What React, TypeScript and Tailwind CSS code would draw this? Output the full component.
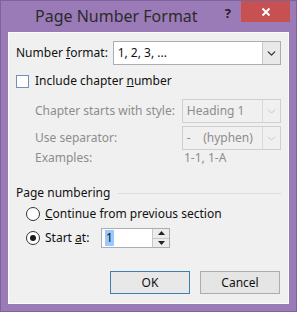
import { ChevronDown } from 'lucide-react';

function Combo({ value, disabled, width }: { value: string; disabled?: boolean; width: string }) {
  return (
    <div
      className={`flex h-[24px] ${width} border ${
        disabled ? 'border-[#cfcfcf] bg-[#f0f0f0] text-[#8d8d8d]' : 'border-[#abadb3] bg-white text-[#111]'
      }`}
    >
      <div className="flex-1 whitespace-pre pl-[4px] leading-[22px]">{value}</div>
      <div
        className={`flex w-[18px] items-center justify-center border-l ${
          disabled ? 'border-[#d9d9d9] text-[#c4c4c4]' : 'border-[#c8c8c8] bg-[#e9e9e9] text-[#3a3a3a]'
        }`}
      >
        <ChevronDown size={13} strokeWidth={disabled ? 1.75 : 2.5} />
      </div>
    </div>
  );
}

function Radio({ checked }: { checked?: boolean }) {
  return (
    <div className="flex h-[14px] w-[14px] items-center justify-center rounded-full border border-[#333] bg-white">
      {checked && <div className="h-[6px] w-[6px] rounded-full bg-[#1a1a1a]" />}
    </div>
  );
}

export default function App() {
  return (
    <div
      className="h-[312px] w-[297px] border border-[#7f629b] bg-[#9a7bb7] text-[12px] text-[#111]"
      style={{ fontFamily: '"Noto Sans", "Open Sans", sans-serif' }}
    >
      <div className="flex h-[31px] items-start">
        <div className="pl-[34px] pt-[4px] text-[16px] leading-[22px] text-[#2b2b2b]">Page Number Format</div>
        <div className="ml-auto pt-[3px] pr-[10px] text-[13px] font-bold text-[#222]">?</div>
        <div className="mr-[6px] flex h-[21px] w-[49px] items-center justify-center bg-[#c75050] text-white">
          <svg width="10" height="10" viewBox="0 0 10 10">
            <path d="M1.5 1.5 L8.5 8.5 M8.5 1.5 L1.5 8.5" stroke="white" strokeWidth="2" />
          </svg>
        </div>
      </div>

      <div className="ml-[7px] h-[272px] w-[281px] border border-[#fbfbfb] bg-[#f0f0f0] px-[7px]">
        <div className="mt-[8px] flex items-center">
          <div className="w-[97px]">
            Number <span className="underline">f</span>ormat:
          </div>
          <Combo value="1, 2, 3, ..." width="w-[169px]" />
        </div>

        <div className="mt-[9px] flex h-[14px] items-center">
          <div className="h-[13px] w-[13px] border border-[#6f8fbd] bg-white" />
          <div className="ml-[6px]">
            Include chapter <span className="underline">n</span>umber
          </div>
        </div>

        <div className="mt-[11px] flex items-center pl-[19px] text-[#8d8d8d]">
          <div className="w-[148px]">Chapter starts with style:</div>
          <Combo value="Heading 1" disabled width="w-[100px]" />
        </div>
        <div className="mt-[3px] flex items-center pl-[19px] text-[#8d8d8d]">
          <div className="w-[148px]">Use separator:</div>
          <Combo value="-    (hyphen)" disabled width="w-[100px]" />
        </div>
        <div className="flex h-[16px] items-center pl-[19px] text-[#8d8d8d]">
          <div className="w-[149px]">Examples:</div>
          <div>1-1, 1-A</div>
        </div>

        <div className="mt-[19px] flex h-[16px] items-center">
          <div>Page numbering</div>
          <div className="ml-[8px] h-px flex-1 bg-[#dcdcdc]" />
        </div>
        <div className="mt-[5px] flex h-[16px] items-center pl-[10px]">
          <Radio />
          <div className="ml-[5px]">
            <span className="underline">C</span>ontinue from previous section
          </div>
        </div>
        <div className="mt-[6px] flex h-[20px] items-center pl-[10px]">
          <Radio checked />
          <div className="ml-[5px] w-[56px]">
            Start <span className="underline">a</span>t:
          </div>
          <div className="flex h-[20px] w-[69px] border border-[#abadb3] bg-white">
            <div className="flex flex-1 items-center pl-[3px]">
              <span className="bg-[#99c9ff] px-px leading-[16px]">1</span>
            </div>
            <div className="flex w-[17px] flex-col border-l border-[#c8c8c8]">
              <div className="flex flex-1 items-center justify-center border-b border-[#c8c8c8] bg-[#ececec]">
                <svg width="7" height="4" viewBox="0 0 7 4">
                  <path d="M0 4 L3.5 0 L7 4 Z" fill="#222" />
                </svg>
              </div>
              <div className="flex flex-1 items-center justify-center bg-[#ececec]">
                <svg width="7" height="4" viewBox="0 0 7 4">
                  <path d="M0 0 L3.5 4 L7 0 Z" fill="#222" />
                </svg>
              </div>
            </div>
          </div>
        </div>

        <div className="mt-[23px] flex justify-end gap-[10px] pr-[1px]">
          <div className="flex h-[23px] w-[80px] items-center justify-center border border-[#3c7fb1] bg-[#e8e8e8]">
            OK
          </div>
          <div className="flex h-[23px] w-[80px] items-center justify-center border border-[#acacac] bg-[#e5e5e5]">
            Cancel
          </div>
        </div>
      </div>
    </div>
  );
}
